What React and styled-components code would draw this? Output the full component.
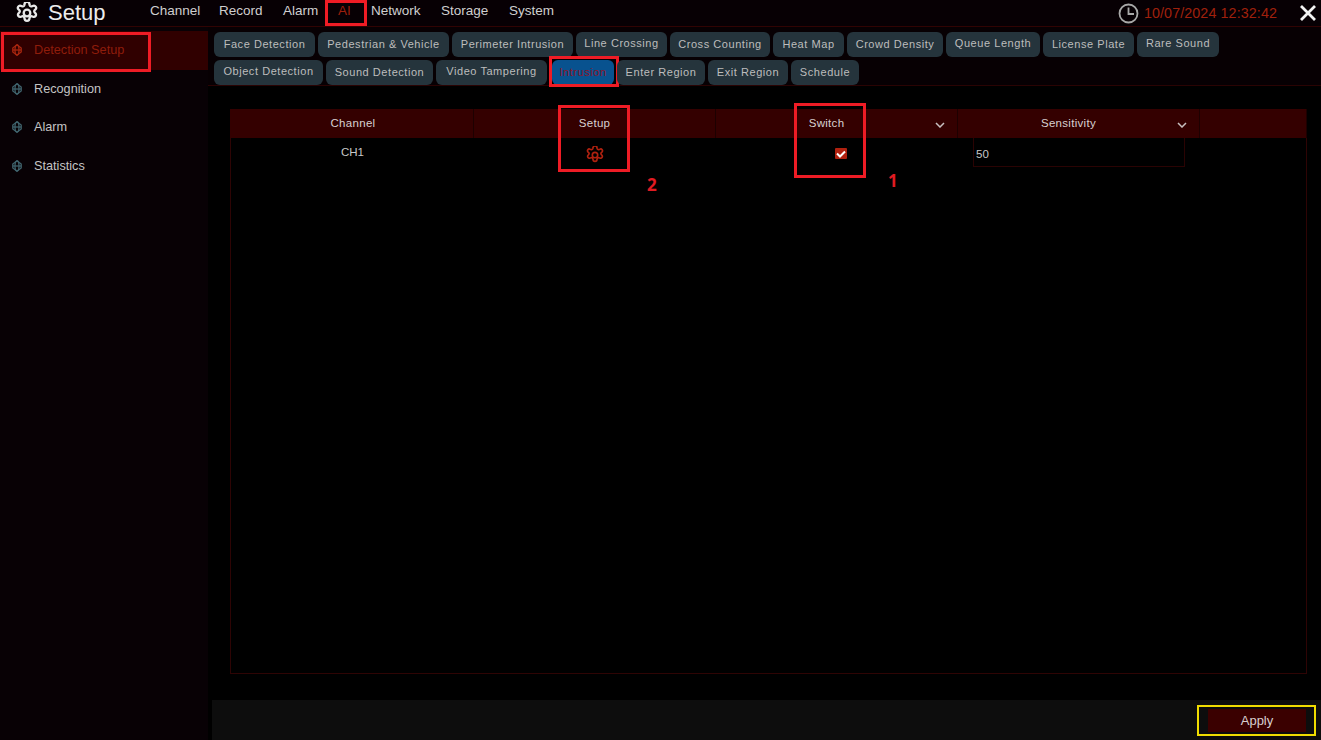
import React from "react";
import styled, { createGlobalStyle } from "styled-components";

const GlobalStyle = createGlobalStyle`
  html, body {
    margin: 0;
    height: 100%;
    background: #000;
  }
  body {
    font-family: "Liberation Sans", Arial, sans-serif;
    color: #d6d6d6;
    overflow: hidden;
  }
`;

const NAV = [
  { label: "Channel", width: 69 },
  { label: "Record", width: 64 },
  { label: "Alarm", width: 55 },
  { label: "AI", width: 33, active: true },
  { label: "Network", width: 70 },
  { label: "Storage", width: 68 },
  { label: "System", width: 60 },
];

const SIDE = [
  { label: "Detection Setup", active: true },
  { label: "Recognition" },
  { label: "Alarm" },
  { label: "Statistics" },
];

const TABS_TOP = [
  { label: "Face Detection", width: 101 },
  { label: "Pedestrian & Vehicle", width: 131 },
  { label: "Perimeter Intrusion", width: 121 },
  { label: "Line Crossing", width: 91, lift: true },
  { label: "Cross Counting", width: 100 },
  { label: "Heat Map", width: 71 },
  { label: "Crowd Density", width: 96 },
  { label: "Queue Length", width: 94, lift: true },
  { label: "License Plate", width: 91 },
  { label: "Rare Sound", width: 82, lift: true },
];

const TABS_BOTTOM = [
  { label: "Object Detection", width: 109, lift: true },
  { label: "Sound Detection", width: 107 },
  { label: "Video Tampering", width: 111, lift: true },
  { label: "Intrusion", width: 62, active: true },
  { label: "Enter Region", width: 88 },
  { label: "Exit Region", width: 80 },
  { label: "Schedule", width: 68 },
];

function GearIcon({ size, color, stroke = 2 }) {
  return (
    <svg width={size} height={size} viewBox="0 0 24 24" fill="none" stroke={color} strokeWidth={stroke} strokeLinejoin="round">
      <path d="M9.3 2.6a2.2 2.2 0 0 1 5.4 0l.3 1a1.8 1.8 0 0 0 2.5 1l1-.4a2.4 2.4 0 0 1 2.7 3.9l-.8.7a1.8 1.8 0 0 0 0 2.6l.8.9a2.4 2.4 0 0 1-2.7 3.8l-1-.4a1.8 1.8 0 0 0-2.5 1.1l-.3 1a2.2 2.2 0 0 1-5.4 0l-.3-1a1.8 1.8 0 0 0-2.5-1.1l-1 .4a2.4 2.4 0 0 1-2.7-3.8l.8-.9a1.8 1.8 0 0 0 0-2.6l-.8-.7a2.4 2.4 0 0 1 2.7-3.9l1 .4a1.8 1.8 0 0 0 2.5-1z" />
      <circle cx="12" cy="12" r="3.6" />
    </svg>
  );
}

// small globe bullet in front of each sidebar entry
function GlobeDot({ color }) {
  return (
    <svg width="10" height="12" viewBox="0 0 10 12" fill="none" stroke={color} strokeWidth="1.3">
      <path d="M5 .8 L9.2 4 V8 L5 11.2 L.8 8 V4 Z" />
      <ellipse cx="5" cy="6" rx="2" ry="5" />
      <path d="M.8 6 H9.2" />
    </svg>
  );
}

function Chevron() {
  return (
    <svg width="10" height="6" viewBox="0 0 10 6" fill="none" stroke="#c8c0c0" strokeWidth="1.5">
      <path d="M1 1 L5 5 L9 1" />
    </svg>
  );
}

function App() {
  return (
    <Page>
      <GlobalStyle />
      <Header>
        <Brand>
          <GearIcon size={22} color="#e8e8e8" stroke={2.5} />
          <BrandText>Setup</BrandText>
        </Brand>
        <Nav>
          {NAV.map((item) => (
            <NavItem key={item.label} $width={item.width} $active={item.active}>
              {item.label}
              {item.active && <NavMark />}
            </NavItem>
          ))}
        </Nav>
        <Clock>
          <svg width="21" height="21" viewBox="0 0 21 21" fill="none" stroke="#a8a8a8" strokeWidth="1.8">
            <circle cx="10.5" cy="10.5" r="9" />
            <path d="M10.5 4.5 V11 H16" />
          </svg>
          <ClockText>10/07/2024 12:32:42</ClockText>
        </Clock>
        <CloseButton>
          <svg width="16" height="16" viewBox="0 0 16 16" stroke="#f2f2f2" strokeWidth="2.8">
            <path d="M1 1 L15 15 M15 1 L1 15" />
          </svg>
        </CloseButton>
      </Header>

      <Body>
        <Sidebar>
          {SIDE.map((item) => (
            <SideItem key={item.label} $active={item.active}>
              <GlobeDot color={item.active ? "#a8260f" : "#3f626c"} />
              <span>{item.label}</span>
              {item.active && <SideMark />}
            </SideItem>
          ))}
        </Sidebar>

        <Main>
          <TabArea>
            <TabRow>
              {TABS_TOP.map((tab) => (
                <Tab key={tab.label} $width={tab.width} $lift={tab.lift}>{tab.label}</Tab>
              ))}
            </TabRow>
            <TabRow>
              {TABS_BOTTOM.map((tab) => (
                <Tab key={tab.label} $width={tab.width} $lift={tab.lift} $active={tab.active}>
                  {tab.label}
                  {tab.active && <TabMark />}
                </Tab>
              ))}
            </TabRow>
          </TabArea>

          <TableWrap>
            <Table>
              <HeadRow>
                <HeadCell $nudge>Channel</HeadCell>
                <HeadCell>
                  Setup
                  <SetupMark />
                </HeadCell>
                <HeadCell $menu>
                  Switch
                  <HeadChevron><Chevron /></HeadChevron>
                  <SwitchMark />
                </HeadCell>
                <HeadCell $menu>
                  Sensitivity
                  <HeadChevron><Chevron /></HeadChevron>
                </HeadCell>
                <HeadCell />
              </HeadRow>
              <DataRow>
                <DataCell>CH1</DataCell>
                <DataCell>
                  <GearIcon size={18} color="#b0210f" stroke={2.2} />
                </DataCell>
                <DataCell>
                  <CheckBox>
                    <svg width="10" height="8" viewBox="0 0 10 8" fill="none" stroke="#fff" strokeWidth="2">
                      <path d="M1 3.5 L4 6.5 L9 1.5" />
                    </svg>
                  </CheckBox>
                </DataCell>
                <DataCell>
                  <ValueBox>50</ValueBox>
                </DataCell>
              </DataRow>
            </Table>
            <Step $left={647} $top={173}>2</Step>
            <Step $left={888} $top={169}>1</Step>
          </TableWrap>

          <Footer>
            <ApplyButton>
              Apply
              <ApplyMark />
            </ApplyButton>
          </Footer>
        </Main>
      </Body>
    </Page>
  );
}

const Page = styled.div`
  width: 1321px;
  height: 740px;
  display: flex;
  flex-direction: column;
  background: #000;
  overflow: hidden;
`;

const Header = styled.header`
  height: 26px;
  display: flex;
  align-items: center;
  background: #070004;
  border-bottom: 1px solid #300303;
`;

const Brand = styled.div`
  width: 150px;
  display: flex;
  align-items: center;
  gap: 10px;
  padding-left: 16px;
  box-sizing: border-box;
`;

const BrandText = styled.span`
  font-size: 22px;
  color: #ececec;
`;

const Nav = styled.nav`
  display: flex;
  flex: 1;
  align-items: center;
  padding-bottom: 6px;
`;

const NavItem = styled.div`
  position: relative;
  width: ${(p) => p.$width}px;
  font-size: 13.5px;
  color: ${(p) => (p.$active ? "#9c1f0c" : "#cfcfcf")};
`;

const Mark = styled.i`
  position: absolute;
  border: 3px solid #ee1c25;
  box-sizing: border-box;
  pointer-events: none;
`;

const NavMark = styled(Mark)`
  left: -13px;
  top: -3px;
  width: 42px;
  height: 26px;
`;

const Clock = styled.div`
  display: flex;
  align-items: center;
  gap: 5px;
  margin-right: 23px;
`;

const ClockText = styled.span`
  font-size: 14.3px;
  color: #a0200c;
  letter-spacing: 0.1px;
`;

const CloseButton = styled.div`
  width: 16px;
  height: 16px;
  margin-right: 5px;
  line-height: 0;
`;

const Body = styled.div`
  flex: 1;
  display: flex;
  min-height: 0;
`;

const Sidebar = styled.aside`
  width: 208px;
  flex-shrink: 0;
  padding-top: 4px;
  background: #080105;
  box-sizing: border-box;
`;

const SideItem = styled.div`
  position: relative;
  height: 38.5px;
  display: flex;
  align-items: center;
  gap: 12px;
  padding-left: 12px;
  font-size: 12.7px;
  color: ${(p) => (p.$active ? "#8f1d0b" : "#c4c4c4")};
  background: ${(p) => (p.$active ? "#300000" : "transparent")};
`;

const SideMark = styled(Mark)`
  left: 1px;
  top: 1px;
  width: 150px;
  height: 40px;
`;

const Main = styled.main`
  flex: 1;
  display: flex;
  flex-direction: column;
  min-width: 0;
`;

const TabArea = styled.div`
  height: 59px;
  padding: 5px 0 0 6px;
  display: flex;
  flex-direction: column;
  gap: 3px;
  background: #070003;
  border-bottom: 1px solid #2a0303;
  box-sizing: border-box;
`;

const TabRow = styled.div`
  display: flex;
  gap: 3px;
`;

const Tab = styled.div`
  position: relative;
  width: ${(p) => p.$width}px;
  height: 25px;
  margin-left: ${(p) => (p.$active ? "2px" : "0")};
  padding-bottom: ${(p) => (p.$lift ? "3px" : "1px")};
  display: flex;
  align-items: center;
  justify-content: center;
  flex-shrink: 0;
  border-radius: 6px;
  box-sizing: border-box;
  font-size: 11px;
  letter-spacing: 0.55px;
  white-space: nowrap;
  color: ${(p) => (p.$active ? "#8a1528" : "#bdbdbd")};
  background: ${(p) => (p.$active ? "#08528f" : "#25343c")};
`;

const TabMark = styled(Mark)`
  left: -3px;
  top: -4px;
  width: 70px;
  height: 31px;
`;

const TableWrap = styled.div`
  position: relative;
  flex: 1;
  padding: 23px 14px 26px 22px;
  display: flex;
  min-height: 0;
`;

const Table = styled.div`
  flex: 1;
  border: 1px solid #2e0404;
  border-top: 0;
`;

const HeadRow = styled.div`
  display: grid;
  grid-template-columns: 244px 242px 242px 242px 1fr;
  height: 29px;
  margin-left: -1px;
  margin-right: -1px;
  background: #340000;
`;

const HeadCell = styled.div`
  position: relative;
  display: flex;
  align-items: center;
  justify-content: center;
  padding-right: ${(p) => (p.$menu ? "20px" : "0")};
  padding-left: ${(p) => (p.$nudge ? "3px" : "0")};
  padding-bottom: 2px;
  box-sizing: border-box;
  font-size: 11.5px;
  letter-spacing: 0.3px;
  color: #d8d0d0;
  border-right: 1px solid #1d0000;
`;

const HeadChevron = styled.span`
  position: absolute;
  right: 12px;
  top: 13px;
  line-height: 0;
`;

const SetupMark = styled(Mark)`
  left: 84px;
  top: -4px;
  width: 72px;
  height: 67px;
`;

const SwitchMark = styled(Mark)`
  left: 78px;
  top: -6px;
  width: 72px;
  height: 75px;
`;

const DataRow = styled.div`
  display: grid;
  grid-template-columns: 243px 242px 242px 242px;
  height: 30px;
`;

const DataCell = styled.div`
  display: flex;
  justify-content: center;
  padding-top: 8px;
  font-size: 11.5px;
  color: #c8c8c8;
  box-sizing: border-box;
`;

const CheckBox = styled.span`
  width: 12px;
  height: 11px;
  margin: 2px 0 0 8px;
  display: flex;
  align-items: center;
  justify-content: center;
  background: #b0210f;
  border-radius: 1px;
`;

const ValueBox = styled.div`
  width: 212px;
  height: 29px;
  margin-top: -8px;
  padding: 10px 0 0 2px;
  border-right: 1px solid #2a0303;
  border-bottom: 1px solid #2a0303;
  border-left: 1px solid #2a0303;
  box-sizing: border-box;
  font-size: 11.5px;
`;

const Step = styled.span`
  position: absolute;
  left: ${(p) => p.$left - 208}px;
  top: ${(p) => p.$top - 86}px;
  font-size: 17px;
  font-weight: 700;
  font-family: "Noto Sans", sans-serif;
  color: #e01b22;
`;

const Footer = styled.footer`
  height: 40px;
  flex-shrink: 0;
  margin-left: 4px;
  display: flex;
  justify-content: flex-end;
  align-items: center;
  padding: 0 15px 0 0;
  background: #0d0d0d;
  box-sizing: border-box;
`;

const ApplyButton = styled.div`
  position: relative;
  width: 98px;
  height: 23px;
  display: flex;
  align-items: center;
  justify-content: center;
  background: #3a0000;
  font-size: 13px;
  color: #d8d0d0;
`;

const ApplyMark = styled(Mark)`
  left: -11px;
  top: -4px;
  width: 119px;
  height: 31px;
  border: 2px solid #f0dc00;
`;

export default App;
